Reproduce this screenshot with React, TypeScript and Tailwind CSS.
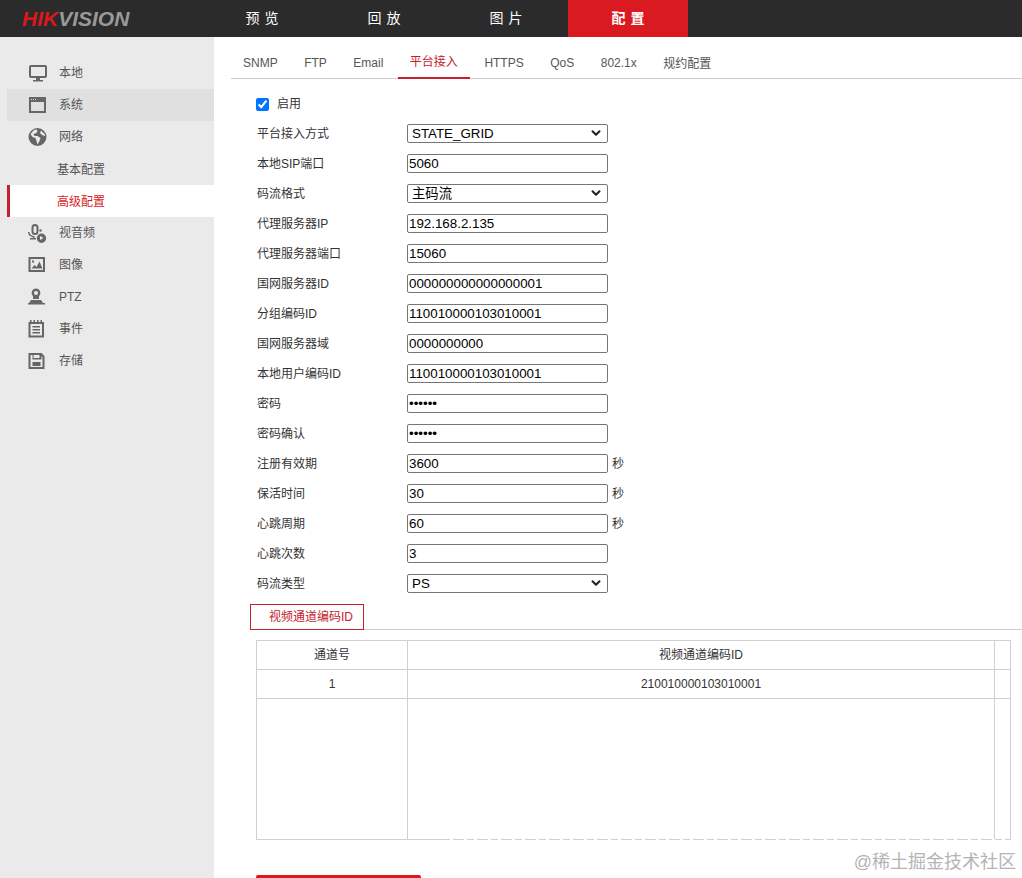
import { ReactNode } from 'react';
import { ChevronDown } from 'lucide-react';

const FONT = 'font-["Liberation_Sans","Noto_Sans_CJK_SC",sans-serif]';

const NAV = ['预览', '回放', '图片', '配置'];
const TABS = ['SNMP', 'FTP', 'Email', '平台接入', 'HTTPS', 'QoS', '802.1x'];

type Row = {
  label: string;
  value: string;
  kind?: 'select' | 'password';
  unit?: string;
};

const ROWS: Row[] = [
  { label: '平台接入方式', value: 'STATE_GRID', kind: 'select' },
  { label: '本地SIP端口', value: '5060' },
  { label: '码流格式', value: '主码流', kind: 'select' },
  { label: '代理服务器IP', value: '192.168.2.135' },
  { label: '代理服务器端口', value: '15060' },
  { label: '国网服务器ID', value: '000000000000000001' },
  { label: '分组编码ID', value: '110010000103010001' },
  { label: '国网服务器域', value: '0000000000' },
  { label: '本地用户编码ID', value: '110010000103010001' },
  { label: '密码', value: '123456', kind: 'password' },
  { label: '密码确认', value: '123456', kind: 'password' },
  { label: '注册有效期', value: '3600', unit: '秒' },
  { label: '保活时间', value: '30', unit: '秒' },
  { label: '心跳周期', value: '60', unit: '秒' },
  { label: '心跳次数', value: '3' },
  { label: '码流类型', value: 'PS', kind: 'select' },
];

function Svg({ children }: { children: ReactNode }) {
  return (
    <svg width="20" height="20" viewBox="0 0 20 20" fill="#666" className="shrink-0">
      {children}
    </svg>
  );
}

const ICONS: Record<string, ReactNode> = {
  monitor: (
    <Svg>
      <path fillRule="evenodd" d="M3 2h14a2 2 0 0 1 2 2v9a2 2 0 0 1-2 2h-5v2h3v1.500H5V17h3v-2H3a2 2 0 0 1-2-2V4a2 2 0 0 1 2-2zm0 2v9h14V4z" />
    </Svg>
  ),
  window: (
    <Svg>
      <path fillRule="evenodd" d="M1 2h17v16H1zm2 5v9h13V7zm0-3v1h1V4zm2 0v1h1V4zm2 0v1h1V4z" />
    </Svg>
  ),
  globe: (
    <Svg>
      <path fillRule="evenodd" d="M9.500 1a9 9 0 1 1 0 18 9 9 0 0 1 0-18zM6 3 2.500 7l2 3 3 1 1 3 1 3.500 2-3.500 1-3-3-2-3 0-1-2 3-1 1-2-1-1.500zM13 3.500l-1 2.500 2 2 3 1 0-1.500z" />
    </Svg>
  ),
  media: (
    <Svg>
      <path fillRule="evenodd" d="M7 1a3.500 3.500 0 0 1 3.500 3.500v4a3.500 3.500 0 0 1-7 0v-4A3.500 3.500 0 0 1 7 1zm0 2a1.500 1.500 0 0 0-1.500 1.500v4a1.500 1.500 0 0 0 3 0v-4A1.500 1.500 0 0 0 7 3z" />
      <path d="M0 9h1.500c.2 2.500 2 3.800 5 4.200V15H8v1.500H2V15h3v-.8C2 13.500 0 12 0 9z" />
      <circle cx="12.500" cy="7.500" r="1.200" />
      <path fillRule="evenodd" d="M13.500 10.500a4.700 4.700 0 1 1 0 9.400 4.700 4.700 0 0 1 0-9.400zm-1.500 2.500v4l3.500-2z" />
    </Svg>
  ),
  image: (
    <Svg>
      <path fillRule="evenodd" d="M0.500 2h16.500v15H0.500zm2 2v11h12.500V4zm1 9.500 3-3.500 2 2 3-5.500 3 7zm.5-8h2v2H4z" />
    </Svg>
  ),
  ptz: (
    <Svg>
      <path fillRule="evenodd" d="M8 1.500a4.500 4.500 0 0 1 3 7.800V12H5V9.300a4.500 4.500 0 0 1 3-7.800zM8 4a2 2 0 1 0 0 4 2 2 0 0 0 0-4zM3 13h10l2 3h2v1.500H0V16h1z" />
    </Svg>
  ),
  event: (
    <Svg>
      <path fillRule="evenodd" d="M0.500 3H2V1h1.500v2h2V1H7v2h2V1h1.500v2h2V1H14v2h2v15.500H0.500zm2 2v11.500H14V5zm2 2h7.500v1.500H4.500zm0 3h7.500v1.500H4.500zm0 3h7.500v1.500H4.500z" />
    </Svg>
  ),
  save: (
    <Svg>
      <path fillRule="evenodd" d="M0.500 2h13l3 3v13h-16zm2 2v12h12V6l-1-1v3.500h-9V4zm3 0v3h6V4zm-1 7h8v4h-8z" />
    </Svg>
  ),
};

function SideItem({ icon, label, active }: { icon: string; label: string; active?: boolean }) {
  return (
    <div className={`flex h-8 items-center pl-[21px] ${active ? 'bg-[#e0e0e0]' : ''}`}>
      <span className="w-[31px]">{ICONS[icon]}</span>
      <span>{label}</span>
    </div>
  );
}

function Field({ row }: { row: Row }) {
  const cls = 'mb-[2px] h-[19px] w-[201px] rounded-[2px] border border-[#767676] bg-white text-[13.33px] leading-none text-black';
  return (
    <div className="flex h-[30px] items-center">
      <label className="w-[150px] text-[#333]">{row.label}</label>
      {row.kind === 'select' ? (
        <div className={`${cls} flex items-center justify-between pl-[4px] pr-[4px]`}>
          <span className="pt-[2px]">{row.value}</span>
          <ChevronDown size={14} strokeWidth={3.5} className="text-[#222]" />
        </div>
      ) : (
        <input
          type={row.kind === 'password' ? 'password' : 'text'}
          defaultValue={row.value}
          className={`${cls} pl-[1px]`}
        />
      )}
      {row.unit && <span className="ml-[4px] text-[#333]">{row.unit}</span>}
    </div>
  );
}

export default function App() {
  return (
    <div className={`flex h-[878px] w-[1022px] flex-col overflow-hidden bg-white text-[12px] ${FONT}`}>
      {/* Header */}
      <div className="flex h-[37px] shrink-0 bg-[#2b2b2b]">
        <div className="flex w-[202px] items-center pl-[22px] text-[21px] font-bold italic leading-none">
          <span className="text-[#d7191f]">HIK</span>
          <span className="text-[#999]">VISION</span>
        </div>
        <div className="flex gap-[2px]">
          {NAV.map((item) => (
            <div
              key={item}
              className={`flex h-[37px] w-[120px] items-center justify-center pl-[5px] text-[14px] tracking-[5px] text-white ${
                item === '配置' ? 'bg-[#da1a21] font-bold' : ''
              }`}
            >
              {item}
            </div>
          ))}
        </div>
      </div>

      <div className="flex min-h-0 flex-1">
        {/* Sidebar */}
        <div className="w-[214px] shrink-0 bg-[#eaeaea] pl-[7px] pt-[20px] text-[#555]">
          <SideItem icon="monitor" label="本地" />
          <SideItem icon="window" label="系统" active />
          <SideItem icon="globe" label="网络" />
          <div className="flex h-8 items-center pl-[50px] pt-[2px]">基本配置</div>
          <div className="flex h-8 items-center border-l-[3px] border-[#c5202d] bg-white pl-[47px] pt-[2px] text-[#da1a21]">高级配置</div>
          <SideItem icon="media" label="视音频" />
          <SideItem icon="image" label="图像" />
          <SideItem icon="ptz" label="PTZ" />
          <SideItem icon="event" label="事件" />
          <SideItem icon="save" label="存储" />
        </div>

        {/* Main */}
        <div className="min-w-0 flex-1">
          <div className="ml-[17px] mt-[3px] flex h-[39px] items-end border-b border-[#ccc] text-[#555]">
            {TABS.map((tab) => (
              <div
                key={tab}
                className={`mb-[-1px] mr-[2.5px] flex h-[39px] items-center px-[12px] pt-[6px] ${
                  tab === '平台接入' ? 'border-b-2 border-[#c5202d] text-[#c5202d]' : ''
                }`}
              >
                {tab}
              </div>
            ))}
            <div className="flex h-[39px] items-center pl-[12px] pt-[10px]">规约配置</div>
          </div>

          <div className="pl-[43px] pt-[10px]">
            <div className="flex h-[30px] items-center">
              <input type="checkbox" defaultChecked className="ml-[-1px] mr-[8px] h-[13px] w-[13px]" />
              <span className="text-[#333]">启用</span>
            </div>
            {ROWS.map((row) => (
              <Field key={row.label} row={row} />
            ))}
          </div>

          <div className="ml-[36px] mt-[5px] flex h-[26px] border-b border-[#ccc]">
            <div className="mb-[-1px] flex w-[114px] items-center border border-[#c5202d] pl-[18px] text-[#c5202d]">视频通道编码ID</div>
          </div>

          <div className="ml-[42px] mt-[10px] grid h-[200px] w-[755px] grid-cols-[151px_587px_1fr] grid-rows-[29px_29px_1fr] border border-[#d0d0d0] text-[#333]">
            <div className="flex items-center justify-center border-b border-r border-[#d0d0d0]">通道号</div>
            <div className="flex items-center justify-center border-b border-r border-[#d0d0d0]">视频通道编码ID</div>
            <div className="border-b border-[#d0d0d0]" />
            <div className="flex items-center justify-center border-b border-r border-[#d0d0d0]">1</div>
            <div className="flex items-center justify-center border-b border-r border-[#d0d0d0]">210010000103010001</div>
            <div className="border-b border-[#d0d0d0]" />
            <div className="border-r border-[#d0d0d0]" />
            <div className="border-r border-[#d0d0d0]" />
            <div />
          </div>

          <div className="relative pt-[35px]">
            {/* watermark halo breaks up the table's bottom line */}
            <div className="absolute left-[236px] top-[-1px] h-px w-[575px] bg-[repeating-linear-gradient(90deg,#fff_0_3px,transparent_3px_14px,#fff_14px_17px,transparent_17px_24px)]" />
            <div className="ml-[42px] h-[30px] w-[165px] rounded-[2px] bg-[#da1a21]" />
            <span className="absolute right-[6px] top-[10px] text-[18px] leading-[24px] text-[#b4b4b4]">@稀土掘金技术社区</span>
          </div>
        </div>
      </div>
    </div>
  );
}
